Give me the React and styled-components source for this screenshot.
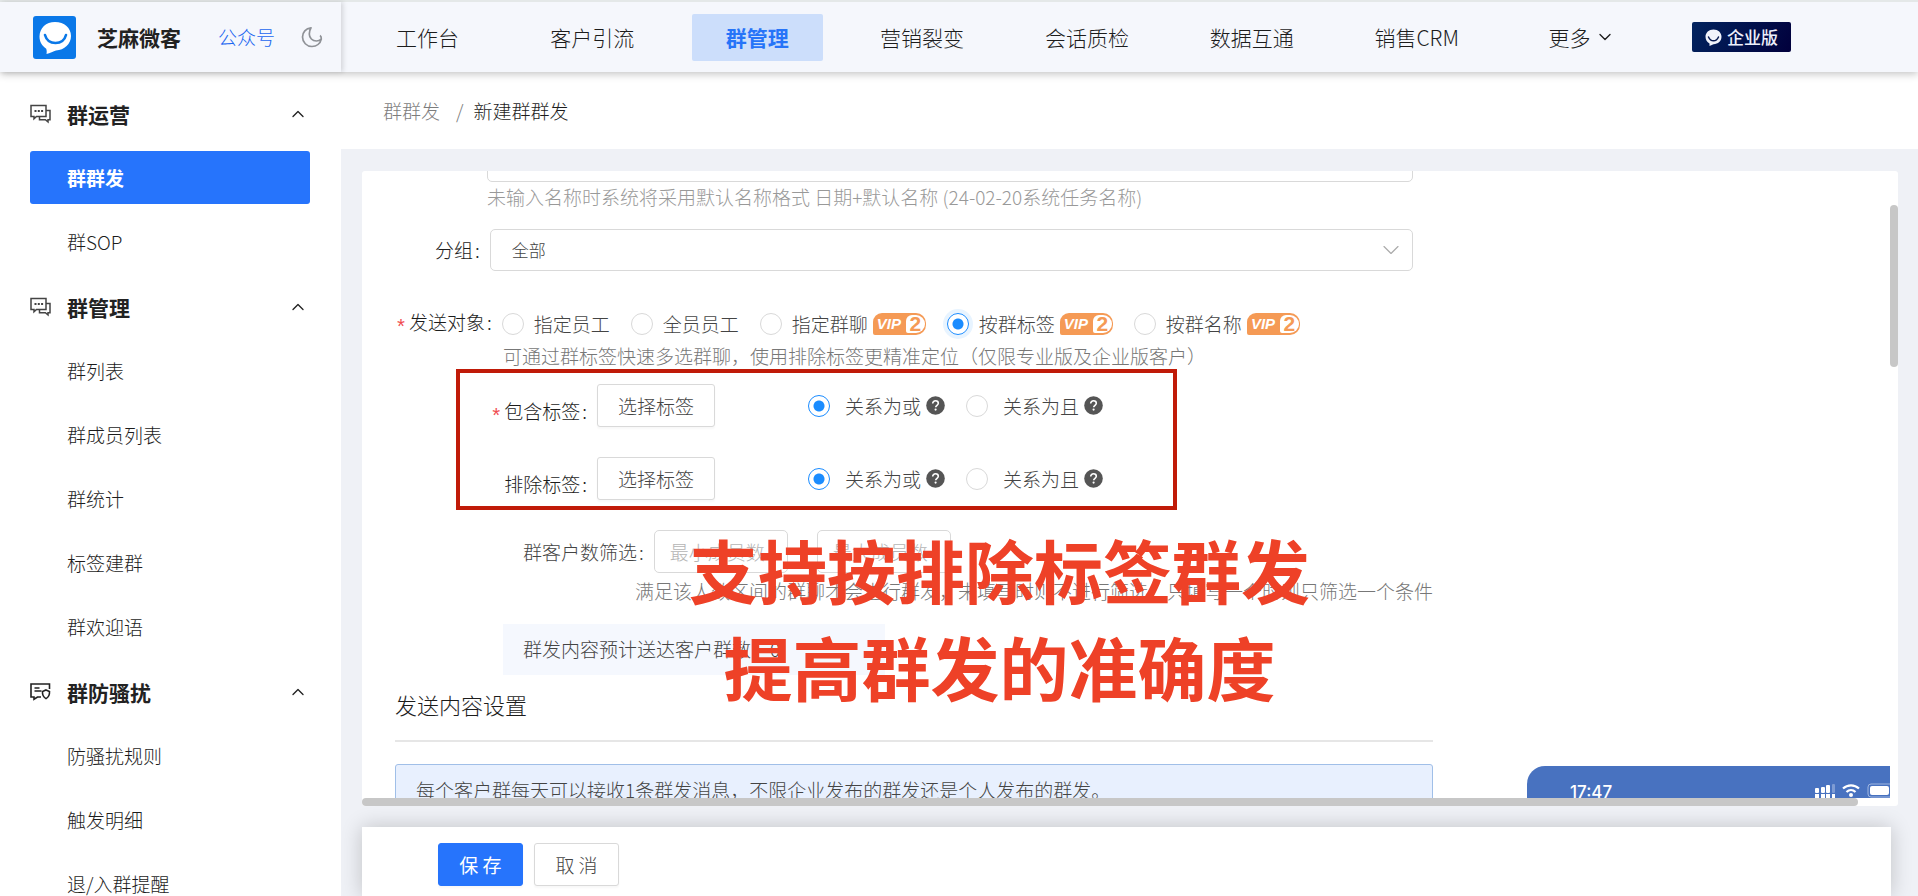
import React, { useState } from "react";
import styled, { createGlobalStyle, css } from "styled-components";
import { ChevronDown, ChevronUp } from "lucide-react";

const navItems = [
  "工作台",
  "客户引流",
  "群管理",
  "营销裂变",
  "会话质检",
  "数据互通",
  "销售CRM",
  "更多",
];

const menu = [
  { title: "群运营", icon: "chat", items: ["群群发", "群SOP"] },
  {
    title: "群管理",
    icon: "chat",
    items: ["群列表", "群成员列表", "群统计", "标签建群", "群欢迎语"],
  },
  {
    title: "群防骚扰",
    icon: "shield",
    items: ["防骚扰规则", "触发明细", "退/入群提醒"],
  },
];

const targets = [
  { label: "指定员工" },
  { label: "全员员工" },
  { label: "指定群聊", vip: true },
  { label: "按群标签", vip: true },
  { label: "按群名称", vip: true },
];

const LogoIcon = () => (
  <svg width="43" height="43" viewBox="0 0 43 43" aria-hidden="true">
    <rect width="43" height="43" rx="3" fill="#0a78e8" />
    <path
      d="M22 6c9.400 0 16 6 16 14s-6.600 14-15 14.500c-2.500 1-6 2.500-9.500 3.500.4-2 .3-3.600-.3-5.300C9 30 6.500 25.600 6.500 20.500 6.500 12 13 6 22 6z"
      fill="#fff"
    />
    <path
      d="M12 19c1.500 5.500 5.500 8 10.500 8s9-2.500 10.500-8"
      fill="none"
      stroke="#0a78e8"
      strokeWidth="2.600"
      strokeLinecap="round"
    />
  </svg>
);

const MoonIcon = () => (
  <svg width="22" height="22" viewBox="0 0 22 22" aria-hidden="true">
    <path
      d="M10 1.800C4.800 2.300 1.500 6.300 1.500 11c0 5.300 4.200 9.500 9.500 9.500 4.600 0 8.300-3 9.300-7.500-1.200 1.200-2.900 2-4.900 2-4 0-7.100-3-7.100-7 0-2.400.7-4.500 1.700-6.200zM19 9.500c1 .7 1.400 1.900 1.300 3.500"
      fill="none"
      stroke="#8f9297"
      strokeWidth="1.700"
      strokeLinejoin="round"
    />
  </svg>
);

const ChatIcon = () => (
  <svg width="21" height="20" viewBox="0 0 21 20" aria-hidden="true">
    <g fill="none" stroke="#444" strokeWidth="1.500">
      <path d="M1 1.500h15v11H6.500L4 14.800v-2.300H1z" />
      <path d="M16 6.500h4v9.300h-2V18l-2.600-2.200H9.500V13" />
    </g>
    <path d="M4.500 6h2v2h-2zM7.800 6h2v2h-2zM11.100 6h2v2h-2z" fill="#444" />
  </svg>
);

const ShieldIcon = () => (
  <svg width="21" height="20" viewBox="0 0 21 20" aria-hidden="true">
    <g fill="none" stroke="#222" strokeWidth="1.600">
      <path d="M19.500 7V2H1v13h3v2.200L7.500 15H11" />
      <path d="M4.500 6h5M4.500 9h7" />
      <path d="M16 8l3.500 1.600c.2 3.400-1 5.600-3.500 7-2.500-1.400-3.700-3.600-3.500-7z" />
    </g>
  </svg>
);

const BubbleIcon = () => (
  <svg width="17" height="17" viewBox="0 0 17 17" aria-hidden="true">
    <path
      d="M8.500.5c4.600 0 8 3.200 8 7.300s-3.400 7.400-8 7.400L4.500 17v-2.500C2 13 .5 10.700.5 7.800.5 3.700 3.900.5 8.500.5z"
      fill="#f1f3fb"
    />
    <path
      d="M3.500 8c1.200 2.800 2.800 3.800 5 3.800s3.800-1 5-3.800"
      fill="none"
      stroke="#06184f"
      strokeWidth="1.500"
      strokeLinecap="round"
    />
  </svg>
);

const HelpIcon = () => (
  <svg width="19" height="19" viewBox="0 0 19 19" aria-hidden="true">
    <circle cx="9.500" cy="9.500" r="9.300" fill="#555" />
    <path
      d="M6.700 7.500c0-1.600 1.200-2.700 2.800-2.700s2.800 1 2.800 2.500c0 2-2.600 2-2.600 4"
      fill="none"
      stroke="#fff"
      strokeWidth="1.600"
    />
    <circle cx="9.600" cy="13.600" r="1.100" fill="#fff" />
  </svg>
);

const StatusIcons = () => (
  <svg width="76" height="18" viewBox="0 0 76 18" aria-hidden="true">
    <g fill="#fff">
      <rect x="1" y="5" width="4" height="5" rx="1" />
      <rect x="7" y="4" width="4" height="6" rx="1" />
      <rect x="12" y="2" width="4" height="8" rx="1" />
      <rect x="18" y="1" width="3" height="9" rx="1" opacity="0.3" />
      <path d="M1 11h4v5H1zM7 11h4v5H7zM12 11h4v5h-4zM18 11h3v5h-3z" />
      <circle cx="37" cy="12" r="2" />
    </g>
    <g fill="none" stroke="#fff" strokeWidth="2.200">
      <path d="M29 5.500c4.500-4.300 11.500-4.300 16 0" />
      <path d="M32.500 9c2.600-2.500 6.400-2.500 9 0" />
    </g>
    <rect x="54" y="1" width="26" height="13" rx="3" fill="none" stroke="#9fb6e0" />
    <rect x="56" y="3" width="19" height="9" rx="2" fill="#fff" />
  </svg>
);

const Vip = () => (
  <VipBadge>
    <span>VIP</span>
    <b>2</b>
  </VipBadge>
);

const TagRow = ({ label, name, required }) => (
  <FrameRow>
    <TagLabel>
      {required && <Star>*</Star>}
      {label}
      <Colon>:</Colon>
    </TagLabel>
    <Button type="button">选择标签</Button>
    <Relations>
      <RadioLabel>
        <Radio name={name} defaultChecked />
        关系为或
        <Help>
          <HelpIcon />
        </Help>
      </RadioLabel>
      <RadioLabel>
        <Radio name={name} />
        关系为且
        <Help>
          <HelpIcon />
        </Help>
      </RadioLabel>
    </Relations>
  </FrameRow>
);

const App = () => {
  const [target, setTarget] = useState("按群标签");

  return (
    <>
      <GlobalStyle />
      <Page>
        <Header>
          <Brand>
            <LogoIcon />
            <BrandName>芝麻微客</BrandName>
            <BrandLink href="#">公众号</BrandLink>
            <IconButton type="button" aria-label="夜间模式">
              <MoonIcon />
            </IconButton>
          </Brand>
          <Nav>
            {navItems.map((item) => (
              <NavCell key={item}>
                <NavLink href="#" $active={item === "群管理"}>
                  {item}
                  {item === "更多" && (
                    <ChevronDown size={20} strokeWidth={1.6} />
                  )}
                </NavLink>
              </NavCell>
            ))}
          </Nav>
          <Edition>
            <BubbleIcon />
            企业版
          </Edition>
        </Header>

        <Body>
          <Sidebar>
            {menu.map((group) => (
              <MenuGroup key={group.title}>
                <MenuTitle>
                  {group.icon === "chat" ? <ChatIcon /> : <ShieldIcon />}
                  <span>{group.title}</span>
                  <ChevronUp size={20} strokeWidth={1.6} />
                </MenuTitle>
                <MenuList>
                  {group.items.map((item) => (
                    <MenuLink href="#" key={item} $active={item === "群群发"}>
                      {item}
                    </MenuLink>
                  ))}
                </MenuList>
              </MenuGroup>
            ))}
          </Sidebar>

          <Main>
            <Breadcrumb>
              <a href="#">群群发</a>
              <i>/</i>
              <span>新建群群发</span>
            </Breadcrumb>

            <Workspace>
              <Card>
                <Viewport>
                  <Content>
                    <NameField>
                      <NameInput aria-label="任务名称" />
                      <Hint>
                        未输入名称时系统将采用默认名称格式 日期+默认名称
                        (24-02-20系统任务名称)
                      </Hint>
                    </NameField>

                    <GroupRow>
                      <label htmlFor="group">
                        分组<Colon>:</Colon>
                      </label>
                      <SelectBox>
                        <Select id="group">
                          <option>全部</option>
                        </Select>
                        <ChevronDown size={28} strokeWidth={1} />
                      </SelectBox>
                    </GroupRow>

                    <TargetRow>
                      <FieldLabel>
                        <Star>*</Star>发送对象<Colon>:</Colon>
                      </FieldLabel>
                      <Targets>
                        {targets.map(({ label, vip }) => (
                          <RadioLabel key={label}>
                            <Radio
                              name="target"
                              checked={target === label}
                              onChange={() => setTarget(label)}
                              $halo
                            />
                            {label}
                            {vip && <Vip />}
                          </RadioLabel>
                        ))}
                      </Targets>
                    </TargetRow>
                    <TargetHint>
                      可通过群标签快速多选群聊，使用排除标签更精准定位（仅限专业版及企业版客户）
                    </TargetHint>

                    <Frame>
                      <TagRow label="包含标签" name="include" required />
                      <TagRow label="排除标签" name="exclude" />
                    </Frame>

                    <FilterRow>
                      <FieldLabel>
                        群客户数筛选<Colon>:</Colon>
                      </FieldLabel>
                      <CountInput placeholder="最小成员数" aria-label="最小成员数" />
                      <CountInput placeholder="最大成员数" aria-label="最大成员数" />
                    </FilterRow>
                    <FilterHint>
                      满足该人数区间的群聊才会进行群发，未填写时则不进行筛选，只填写一个时则只筛选一个条件
                    </FilterHint>

                    <Estimate>群发内容预计送达客户群数：0</Estimate>

                    <SectionTitle>发送内容设置</SectionTitle>
                    <Divider />

                    <Preview>
                      <Notice>
                        每个客户群每天可以接收1条群发消息，不限企业发布的群发还是个人发布的群发。
                      </Notice>
                      <Phone>
                        <span>17:47</span>
                        <StatusIcons />
                      </Phone>
                    </Preview>
                  </Content>
                  <ScrollColumn>
                    <ScrollThumb />
                  </ScrollColumn>
                </Viewport>
                <ScrollRow />
              </Card>

              <Footer>
                <ActionButton type="button" $primary>
                  保 存
                </ActionButton>
                <ActionButton type="button">取 消</ActionButton>
              </Footer>
            </Workspace>
            <Caption>
              支持按排除标签群发
              <br />
              提高群发的准确度
            </Caption>
          </Main>
        </Body>
      </Page>
    </>
  );
};

const GlobalStyle = createGlobalStyle`
  * {
    box-sizing: border-box;
  }
  body {
    margin: 0;
    overflow: hidden;
    background: #fff;
    color: #1c1c1c;
    font-family: "Noto Sans CJK SC", sans-serif;
    font-size: 19px;
    font-weight: 300;
    line-height: 26px;
  }
  button, input, select {
    font: inherit;
    color: inherit;
    margin: 0;
  }
  a {
    color: inherit;
    text-decoration: none;
  }
  p, h1, h2 {
    margin: 0;
    font-weight: inherit;
  }
  svg {
    flex: none;
  }
`;

const Page = styled.div`
  height: 100vh;
  display: flex;
  flex-direction: column;
`;

const Header = styled.header`
  flex: none;
  height: 72px;
  display: flex;
  align-items: center;
  border-top: 2px solid #e4e8e8;
  background: #f5f7fc;
  box-shadow: 0 2px 8px rgba(0, 0, 0, 0.24);
  position: relative;
  z-index: 1;
`;

const Brand = styled.div`
  width: 341px;
  align-self: stretch;
  padding: 0 18px 0 33px;
  display: flex;
  align-items: center;
  box-shadow: 2px 0 5px rgba(0, 0, 0, 0.14);
`;

const BrandName = styled.h1`
  margin: 0 37px 0 21px;
  font-size: 21px;
  font-weight: 700;
  color: #222;
`;

const BrandLink = styled.a`
  color: #1a66f0;
`;

const IconButton = styled.button`
  margin-left: auto;
  padding: 0;
  border: 0;
  background: none;
  display: flex;
`;

const Nav = styled.nav`
  flex: 1;
  display: grid;
  grid-template-columns: repeat(8, 1fr);
  padding: 0 28px 0 4px;
`;

const NavCell = styled.div`
  padding: 0 17px;
`;

const NavLink = styled.a`
  height: 47px;
  display: flex;
  align-items: center;
  justify-content: center;
  gap: 4px;
  font-size: 21px;
  white-space: nowrap;
  ${({ $active }) =>
    $active &&
    css`
      background: #ccdefb;
      color: #2674f8;
      font-weight: 700;
      border-radius: 2px;
    `}
`;

const Edition = styled.div`
  width: 99px;
  height: 30px;
  margin-right: 127px;
  display: flex;
  align-items: center;
  justify-content: center;
  gap: 5px;
  border-radius: 2px;
  background: linear-gradient(120deg, #02245f, #01003c);
  color: #eef0fb;
  font-size: 17px;
  font-weight: 500;
`;

const Body = styled.div`
  flex: 1;
  min-height: 0;
  display: flex;
`;

const Sidebar = styled.aside`
  width: 341px;
  flex: none;
  padding: 11px 31px 0 30px;
  overflow: hidden;
`;

const MenuGroup = styled.section`
  & + & {
    margin-top: 8px;
  }
`;

const MenuTitle = styled.h2`
  height: 61px;
  display: flex;
  align-items: center;
  gap: 16px;
  padding-right: 2px;
  font-size: 21px;
  font-weight: 700;
  color: #222;
  span {
    flex: 1;
  }
`;

const MenuList = styled.div`
  display: flex;
  flex-direction: column;
  gap: 11px;
  padding-top: 7px;
`;

const MenuLink = styled.a`
  height: 53px;
  display: flex;
  align-items: center;
  padding-left: 37px;
  border-radius: 3px;
  ${({ $active }) =>
    $active &&
    css`
      background: #2674fc;
      color: #fff;
      font-weight: 700;
    `}
`;

const Main = styled.main`
  flex: 1;
  min-width: 0;
  display: flex;
  flex-direction: column;
  position: relative;
`;

const Breadcrumb = styled.div`
  height: 77px;
  flex: none;
  display: flex;
  align-items: center;
  padding-left: 42px;
  a,
  i {
    color: #7c7c7c;
    font-style: normal;
  }
  i {
    margin: 0 10px 0 16px;
  }
`;

const Workspace = styled.div`
  flex: 1;
  min-height: 0;
  display: flex;
  flex-direction: column;
  gap: 21px;
  padding: 22px 20px 0 21px;
  background: #eff1f6;
`;

const Card = styled.div`
  flex: 1;
  min-height: 0;
  display: flex;
  flex-direction: column;
  border-radius: 3px;
  background: #fff;
`;

const Viewport = styled.div`
  flex: 1;
  min-height: 0;
  display: flex;
  overflow: hidden;
`;

/* the form is scrolled, so the name field is cut by the top edge */
const Content = styled.form`
  flex: 1;
  min-width: 0;
  margin-top: -31px;
  padding-left: 33px;
  overflow: hidden;
`;

const ScrollColumn = styled.div`
  width: 8px;
  padding-top: 34px;
`;

const ScrollThumb = styled.div`
  height: 162px;
  border-radius: 4px;
  background: #c7c7c7;
`;

const ScrollRow = styled.div`
  height: 8px;
  flex: none;
  margin-right: 40px;
  border-radius: 4px;
  background: #c7c7c7;
`;

const boxed = css`
  border: 1px solid #d9d9d9;
  border-radius: 5px;
  background: #fff;
  outline: none;
`;

const NameField = styled.div`
  padding-left: 92px;
`;

const NameInput = styled.input`
  ${boxed}
  display: block;
  width: 100%;
  max-width: 926px;
  height: 42px;
`;

const Hint = styled.p`
  margin-top: 2px;
  color: #999;
  white-space: nowrap;
`;

const Colon = styled.span`
  margin: 0 10px 0 2px;
`;

const Star = styled.span`
  margin-right: 2px;
  color: #f04b4f;
  font-family: "Liberation Mono", monospace;
  font-size: 20px;
  font-weight: 400;
  line-height: 1;
  vertical-align: -4px;
`;

const FieldLabel = styled.span`
  white-space: nowrap;
`;

const GroupRow = styled.div`
  margin-top: 19px;
  padding-left: 40px;
  display: flex;
  align-items: center;
`;

const SelectBox = styled.div`
  flex: 1;
  max-width: 923px;
  position: relative;
  svg {
    position: absolute;
    right: 8px;
    top: 7px;
    color: #aaa;
    pointer-events: none;
  }
`;

const Select = styled.select`
  ${boxed}
  appearance: none;
  display: block;
  width: 100%;
  height: 42px;
  padding: 0 21px;
  color: #444;
  font-size: 17px;
`;

const TargetRow = styled.div`
  height: 26px;
  margin-top: 40px;
  display: flex;
  align-items: center;
`;

const Targets = styled.div`
  display: flex;
  gap: 21px;
`;

const RadioLabel = styled.label`
  display: flex;
  align-items: center;
  color: #444;
  white-space: nowrap;
`;

const Radio = styled.input.attrs({ type: "radio" })`
  appearance: none;
  width: 22px;
  height: 22px;
  margin-right: 10px;
  border: 1px solid #d9d9d9;
  border-radius: 50%;
  background: #fff;
  &:checked {
    border-color: #1a8cff;
    background: radial-gradient(circle, #1a8cff 5px, #fff 6px);
    box-shadow: ${({ $halo }) => ($halo ? "0 0 0 4px #e8f4ff" : "none")};
  }
`;

const VipBadge = styled.span`
  width: 53px;
  height: 22px;
  margin-left: 5px;
  display: flex;
  align-items: center;
  padding: 2px 1px 2px 4px;
  border-radius: 9px 10px 10px 2px;
  background: #f59a55;
  color: #fff;
  font-family: "Liberation Sans", sans-serif;
  font-size: 15px;
  font-weight: 700;
  font-style: italic;
  line-height: 18px;
  span {
    flex: 1;
  }
  b {
    width: 19px;
    border-radius: 6px 9px 9px 2px;
    background: #fff;
    color: #f59a55;
    font-size: 21px;
    font-style: normal;
    text-align: center;
  }
`;

const TargetHint = styled.p`
  margin-top: 6px;
  padding-left: 108px;
  color: #777;
  white-space: nowrap;
`;

const Frame = styled.div`
  width: 721px;
  margin-left: 61px;
  padding: 11px 0 6px 29px;
  display: flex;
  flex-direction: column;
  gap: 30px;
  border: 4px solid #c01a08;
`;

const FrameRow = styled.div`
  display: flex;
  align-items: center;
`;

const TagLabel = styled.span`
  width: 108px;
  height: 32px;
  align-self: flex-end;
  line-height: 32px;
  text-align: right;
  white-space: nowrap;
`;

const Button = styled.button`
  width: 118px;
  height: 43px;
  padding: 0;
  border: 1px solid #d9d9d9;
  border-radius: 3px;
  background: #fff;
  box-shadow: 0 2px 2px rgba(0, 0, 0, 0.03);
  color: #444;
`;

const Relations = styled.div`
  margin-left: 93px;
  display: flex;
  gap: 21px;
  ${Radio} {
    margin-right: 15px;
  }
`;

const Help = styled.span`
  margin-left: 5px;
  display: flex;
`;

const FilterRow = styled.div`
  margin-top: 20px;
  padding-left: 128px;
  display: flex;
  align-items: center;
  color: #444;
`;

const CountInput = styled.input`
  ${boxed}
  width: 134px;
  height: 43px;
  padding: 0 15px;
  & + & {
    margin-left: 29px;
  }
  &::placeholder {
    color: #b5b5b5;
  }
`;

const FilterHint = styled.p`
  margin-top: 5px;
  padding-left: 240px;
  color: #777;
  white-space: nowrap;
`;

const Estimate = styled.div`
  width: 382px;
  height: 51px;
  margin: 20px 0 0 108px;
  padding-left: 20px;
  background: #f5f8fe;
  color: #444;
  line-height: 50px;
`;

const SectionTitle = styled.h2`
  margin-top: 16px;
  font-size: 22px;
`;

const Divider = styled.div`
  max-width: 1038px;
  height: 2px;
  margin: 23px 0 22px;
  background: #e6e6e6;
`;

const Preview = styled.div`
  display: flex;
  align-items: flex-start;
  gap: 94px;
`;

const Notice = styled.p`
  flex: 0 1 1038px;
  padding: 12px 20px;
  border: 1px solid #a0bfe8;
  border-radius: 3px;
  background: #e8f0fe;
  color: #444;
`;

const Phone = styled.div`
  flex: 1;
  height: 80px;
  margin-top: 2px;
  padding: 17px 0 0 43px;
  display: flex;
  align-items: flex-start;
  justify-content: space-between;
  border-top-left-radius: 18px;
  background: #4872c0;
  color: #fff;
  font-family: Inter, sans-serif;
  font-size: 17px;
  font-weight: 500;
  line-height: 18px;
`;

const Footer = styled.footer`
  height: 69px;
  flex: none;
  margin-right: 7px;
  padding: 16px 0 0 76px;
  display: flex;
  align-items: flex-start;
  gap: 11px;
  background: #fff;
  box-shadow: 0 0 20px rgba(0, 0, 0, 0.2);
`;

const ActionButton = styled(Button)`
  width: 85px;
  ${({ $primary }) =>
    $primary &&
    css`
      border-color: #2674fc;
      background: #2674fc;
      color: #fff;
      font-weight: 400;
    `}
`;

const Caption = styled.p`
  position: absolute;
  top: 449px;
  left: 0;
  right: 260px;
  color: #ee4127;
  font-size: 69px;
  font-weight: 700;
  line-height: 97px;
  text-align: center;
  pointer-events: none;
`;

export default App;
